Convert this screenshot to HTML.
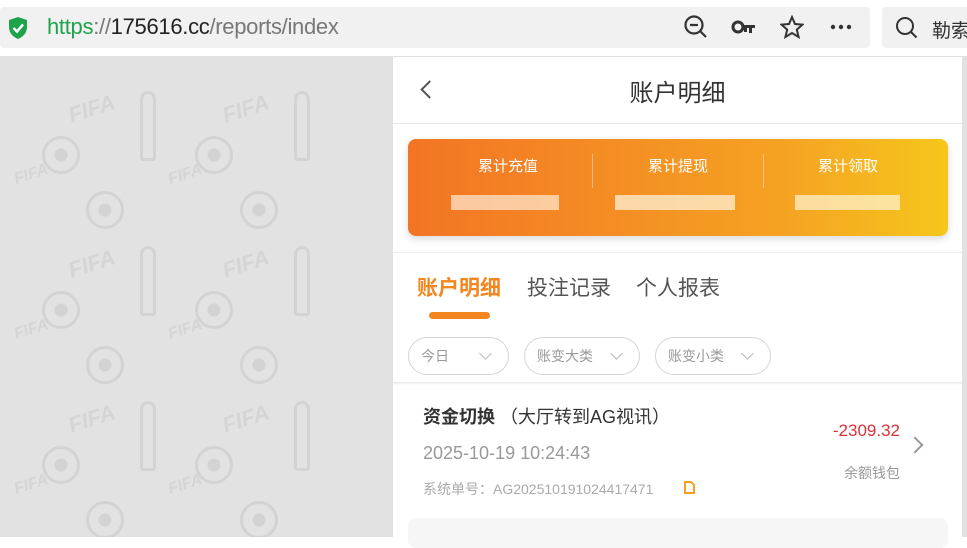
<!DOCTYPE html>
<html><head><meta charset="utf-8"><style>
*{margin:0;padding:0;box-sizing:border-box}
body{width:967px;height:537px;overflow:hidden;background:#fff;font-family:"Liberation Sans","Noto Sans CJK SC",sans-serif;position:relative}
.abs{position:absolute;white-space:nowrap}
.bg{left:0;top:56px;width:967px;height:481px;background:#e2e2e2;overflow:hidden}
.ball{position:absolute;width:38px;height:38px;border:3px solid #d3d3d3;border-radius:50%;background:radial-gradient(circle,#d3d3d3 6px,transparent 7px)}
.fifa{position:absolute;color:#d5d5d5;font-weight:bold;font-size:22px;transform:rotate(-18deg);font-style:italic}
.cup{position:absolute;width:16px;height:70px;border:3px solid #d3d3d3;border-radius:8px 8px 3px 3px}
.panel{left:393px;top:57px;width:569px;height:480px;background:#fff}
.pill{position:absolute;top:337px;height:38px;border:1px solid #d6d6d6;border-radius:19px;font-size:14px;color:#999;line-height:36px;padding-left:12px}
.chev{position:absolute;width:9px;height:9px;border-right:1.5px solid #bbb;border-bottom:1.5px solid #bbb;transform:rotate(45deg)}
</style></head><body>
<div class="abs" style="left:0;top:7px;width:870px;height:41px;background:#f1f1f1;border-radius:4px"></div>
<svg class="abs" style="left:7px;top:16px" width="22" height="24" viewBox="0 0 22 24"><path d="M11 1 L20 4 V11 C20 17 16 21 11 23 C6 21 2 17 2 11 V4Z" fill="#1fa34a"/><path d="M6.5 12 L10 15.5 L16 8.5" stroke="#fff" stroke-width="2.5" fill="none"/></svg>
<div class="abs" style="left:47px;top:14px;font-size:22px;color:#777;letter-spacing:-0.3px"><span style="color:#1fa34a">https</span>://<span style="color:#222">175616.cc</span>/reports/index</div>
<svg class="abs" style="left:683px;top:14px" width="26" height="26" viewBox="0 0 26 26" fill="none" stroke="#333" stroke-width="2.2"><circle cx="11" cy="11" r="8.5"/><path d="M7 11h8M17 17l6 6"/></svg>
<svg class="abs" style="left:731px;top:18px" width="26" height="18" viewBox="0 0 26 18"><circle cx="7" cy="9" r="5" fill="none" stroke="#333" stroke-width="3"/><path d="M12 7h12v3h-3v5h-3v-5h-2v4h-3v-4h-1z" fill="#333"/></svg>
<svg class="abs" style="left:780px;top:15px" width="24" height="24" viewBox="0 0 24 24"><path d="M12 2l3 7 7.5.6-5.7 5 1.8 7.4L12 18l-6.6 4 1.8-7.4-5.7-5L9 9z" fill="none" stroke="#333" stroke-width="2"/></svg>
<svg class="abs" style="left:830px;top:24px" width="22" height="6" viewBox="0 0 22 6" fill="#333"><circle cx="3" cy="3" r="2.2"/><circle cx="11" cy="3" r="2.2"/><circle cx="19" cy="3" r="2.2"/></svg>
<div class="abs" style="left:882px;top:7px;width:90px;height:41px;background:#f1f1f1;border-radius:4px"></div>
<svg class="abs" style="left:894px;top:15px" width="26" height="26" viewBox="0 0 26 26" fill="none" stroke="#333" stroke-width="2"><circle cx="11" cy="11" r="8"/><path d="M16.5 16.5l6 6"/></svg>
<div class="abs" style="left:932px;top:16px;font-size:19px;color:#333">勒索</div>

<div class="abs bg">
<div class="ball" style="left:42px;top:80px"></div><div class="ball" style="left:195px;top:80px"></div>
<div class="ball" style="left:86px;top:135px"></div><div class="ball" style="left:240px;top:135px"></div>
<div class="ball" style="left:42px;top:235px"></div><div class="ball" style="left:195px;top:235px"></div>
<div class="ball" style="left:86px;top:290px"></div><div class="ball" style="left:240px;top:290px"></div>
<div class="ball" style="left:42px;top:390px"></div><div class="ball" style="left:195px;top:390px"></div>
<div class="ball" style="left:86px;top:445px"></div><div class="ball" style="left:240px;top:445px"></div>
<div class="cup" style="left:140px;top:35px"></div><div class="cup" style="left:294px;top:35px"></div>
<div class="cup" style="left:140px;top:190px"></div><div class="cup" style="left:294px;top:190px"></div>
<div class="cup" style="left:140px;top:345px"></div><div class="cup" style="left:294px;top:345px"></div>
<div class="fifa" style="left:68px;top:40px">FIFA</div><div class="fifa" style="left:222px;top:40px">FIFA</div>
<div class="fifa" style="left:14px;top:110px;font-size:16px">FIFA</div><div class="fifa" style="left:168px;top:110px;font-size:16px">FIFA</div>
<div class="fifa" style="left:68px;top:195px">FIFA</div><div class="fifa" style="left:222px;top:195px">FIFA</div>
<div class="fifa" style="left:14px;top:265px;font-size:16px">FIFA</div><div class="fifa" style="left:168px;top:265px;font-size:16px">FIFA</div>
<div class="fifa" style="left:68px;top:350px">FIFA</div><div class="fifa" style="left:222px;top:350px">FIFA</div>
<div class="fifa" style="left:14px;top:420px;font-size:16px">FIFA</div><div class="fifa" style="left:168px;top:420px;font-size:16px">FIFA</div>
</div>

<div class="abs panel"></div>
<div class="abs" style="left:423px;top:83px;width:13px;height:13px;border-left:2px solid #555;border-bottom:2px solid #555;transform:rotate(45deg)"></div>
<div class="abs" style="left:393px;top:73px;width:569px;text-align:center;font-size:24px;color:#333">账户明细</div>
<div class="abs" style="left:393px;top:123px;width:569px;height:1px;background:#e8e8e8"></div>
<div class="abs" style="left:408px;top:139px;width:540px;height:97px;border-radius:8px;background:linear-gradient(90deg,#f37424,#f5a323 70%,#f5c71c);box-shadow:0 3px 8px rgba(0,0,0,.15)"></div>
<div class="abs" style="left:592px;top:154px;width:1px;height:34px;background:rgba(255,255,255,.4)"></div>
<div class="abs" style="left:763px;top:154px;width:1px;height:34px;background:rgba(255,255,255,.4)"></div>
<div class="abs" style="left:408px;top:155px;width:200px;text-align:center;font-size:15px;color:#fff">累计充值</div>
<div class="abs" style="left:578px;top:155px;width:200px;text-align:center;font-size:15px;color:#fff">累计提现</div>
<div class="abs" style="left:748px;top:155px;width:200px;text-align:center;font-size:15px;color:#fff">累计领取</div>
<div class="abs" style="left:451px;top:195px;width:108px;height:15px;background:rgba(255,235,215,.7)"></div>
<div class="abs" style="left:615px;top:195px;width:120px;height:15px;background:rgba(255,240,215,.75)"></div>
<div class="abs" style="left:795px;top:195px;width:105px;height:15px;background:rgba(255,245,215,.7)"></div>
<div class="abs" style="left:393px;top:252px;width:569px;height:1px;background:#eee"></div>
<div class="abs" style="left:417px;top:272px;font-size:21px;color:#f5851f;font-weight:bold">账户明细</div>
<div class="abs" style="left:527px;top:272px;font-size:21px;color:#555">投注记录</div>
<div class="abs" style="left:636px;top:272px;font-size:21px;color:#555">个人报表</div>
<div class="abs" style="left:429px;top:312px;width:61px;height:7px;border-radius:4px;background:#f5851f"></div>
<div class="pill" style="left:408px;width:101px">今日</div><div class="chev" style="left:481px;top:349px"></div>
<div class="pill" style="left:524px;width:116px">账变大类</div><div class="chev" style="left:612px;top:349px"></div>
<div class="pill" style="left:655px;width:116px">账变小类</div><div class="chev" style="left:743px;top:349px"></div>
<div class="abs" style="left:393px;top:382px;width:569px;height:3px;background:linear-gradient(#e8e8e8,#fff)"></div>
<div class="abs" style="left:423px;top:403px;font-size:18px;color:#333"><b>资金切换</b> （大厅转到AG视讯）</div>
<div class="abs" style="left:423px;top:443px;font-size:18px;color:#999">2025-10-19 10:24:43</div>
<div class="abs" style="left:423px;top:479px;font-size:14px;color:#aaa">系统单号：AG202510191024417471</div>
<svg class="abs" style="left:684px;top:481px" width="11" height="13" viewBox="0 0 11 13"><path d="M1 1h6l3 3v8H1z" fill="none" stroke="#f5a020" stroke-width="2"/></svg>
<div class="abs" style="left:800px;top:421px;width:100px;text-align:right;font-size:17px;color:#d8323a">-2309.32</div>
<div class="abs" style="left:800px;top:463px;width:100px;text-align:right;font-size:14px;color:#999">余额钱包</div>
<div class="abs" style="left:909px;top:439px;width:12px;height:12px;border-right:2px solid #999;border-top:2px solid #999;transform:rotate(45deg)"></div>
<div class="abs" style="left:408px;top:518px;width:540px;height:30px;border-radius:8px;background:#f6f6f6"></div>
</body></html>
